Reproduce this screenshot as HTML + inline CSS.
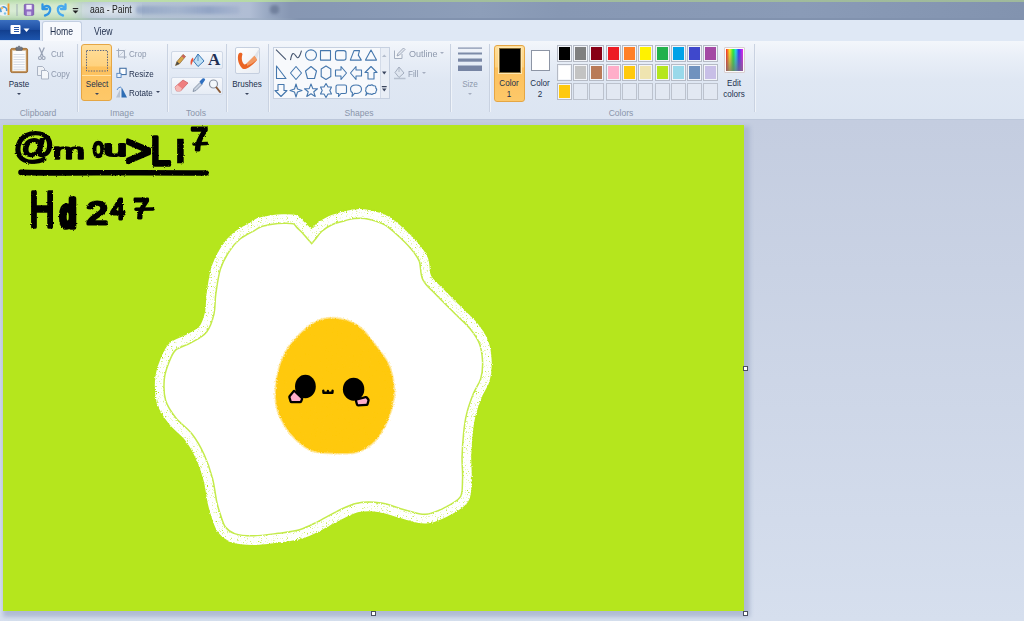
<!DOCTYPE html>
<html><head><meta charset="utf-8"><title>aaa - Paint</title>
<style>
*{box-sizing:border-box;margin:0;padding:0}
html,body{width:1024px;height:621px;overflow:hidden;background:#cdd6e7}
body{font-family:"Liberation Sans",sans-serif;font-size:11px;color:#1e2b45;position:relative}
#app{position:absolute;left:0;top:0;width:1024px;height:621px;overflow:hidden}
.abs{position:absolute}
/* title bar */
#title{left:0;top:0;width:1024px;height:20px;background:linear-gradient(90deg,#b6c6d3 0,#b6c6d3 95px,#b0bdd4 250px,#98a8c2 268px,#8797b3 290px,#8798b4 330px,#8d9eb9 480px,#8798b4 560px,#8a9bb7 800px,#8293af 1024px)}
#title:before{content:"";position:absolute;left:0;top:0;width:100%;height:1.5px;background:linear-gradient(90deg,#c3e3ae,#b5d8a6 260px,#a3c09c 300px,#9fb99c 1024px)}
#title:after{content:"";position:absolute;left:0;top:18px;width:100%;height:2px;background:linear-gradient(90deg,#a8c9a5,#a9bfc4 100px,#9fafc6 260px,#8192ae 300px,#8192ae 1024px)}
#tleft{left:0;top:0;width:92px;height:20px;background:linear-gradient(#b7dcaa 0,#d2e8cb 25%,#d9ecd5 55%,#c4dfbf 85%,#a9cca5 100%);-webkit-mask-image:linear-gradient(90deg,#000 0,#000 70px,transparent 92px);mask-image:linear-gradient(90deg,#000 0,#000 70px,transparent 92px)}
#tglow{left:82px;top:2px;width:60px;height:16px;background:radial-gradient(ellipse at center,rgba(235,240,246,.85) 0,rgba(225,232,242,.5) 50%,rgba(225,232,242,0) 100%)}
#tblur{left:136px;top:6px;width:104px;height:8px;background:linear-gradient(90deg,rgba(120,142,185,.55),rgba(135,155,195,.35) 40%,rgba(120,142,185,.55) 70%,rgba(150,165,200,.3));filter:blur(1.5px);border-radius:3px}
#tblob{left:270px;top:5px;width:9px;height:9px;background:rgba(90,105,135,.6);filter:blur(1.5px);border-radius:4px}
#ttext{left:90px;top:3px;font-size:10.5px;color:#1a1a1a;white-space:nowrap;transform:scaleX(.82);transform-origin:0 50%}
/* tab row */
#tabs{left:0;top:20px;width:1024px;height:21px;background:#dfe8f5}
#filebtn{left:0;top:20px;width:39.5px;height:19.5px;background:linear-gradient(#3b6fc0,#1c4da1 50%,#123f8e 51%,#1d55ad);border-radius:0 3px 0 0}
#hometab{left:42px;top:21px;width:39.5px;height:20px;background:#f7f9fd;border:1px solid #c3cfe2;border-bottom:none;border-radius:3px 3px 0 0}
.tabtxt{top:25px;font-size:10.5px;color:#24324f;white-space:nowrap;transform:scaleX(.82);transform-origin:0 50%}
/* ribbon */
#ribbon{left:0;top:41px;width:1024px;height:79px;background:linear-gradient(#f3f6fb 0,#e8eef7 18px,#dfe7f3 40px,#dce5f2 100%);border-bottom:1px solid #bcc7da}
.sep{position:absolute;top:44px;width:1px;height:68px;background:#c9d2e1;box-shadow:1px 0 0 #eff3f9}
.glabel{position:absolute;top:106px;font-size:9.5px;margin-top:.9px;color:#8a95aa;white-space:nowrap;transform:translateX(-50%) scaleX(.9)}
.t{position:absolute;font-size:9.5px;margin-top:.9px;color:#22304d;white-space:nowrap;transform:scaleX(.85);transform-origin:0 50%}
.tc{position:absolute;font-size:9.5px;margin-top:.4px;color:#22304d;white-space:nowrap;transform:translateX(-50%) scaleX(.85);text-align:center;line-height:11px}
.dis{color:#8e99ad}
.arr{position:absolute;width:0;height:0;margin-left:.5px;border-left:2px solid transparent;border-right:2px solid transparent;border-top:2.5px solid #3a455e}
.obtn{position:absolute;border:1px solid #e5a644;border-radius:3px;background:linear-gradient(#ffdf9c 0,#ffd27e 38%,#fdc15d 40%,#fdc869 100%)}
/* work area */
#work{left:0;top:120px;width:1024px;height:501px;background:linear-gradient(#c4cde0 0,#c9d2e4 150px,#d2dbeb 400px,#d6dfee 100%)}
#cshadow{left:3px;top:126px;width:747px;height:491px;background:#a9b5cf;opacity:.85;filter:blur(2px)}
#canvas{left:3px;top:125px;width:740.5px;height:485.5px;background:#b5e61d;overflow:hidden}
.pc{position:absolute;width:15px;height:17px;border:1px solid #b5bac5;background:#f3f5f9;padding:1px}.pc div{width:100%;height:100%}.pe{background:#e2e8f2;border-color:#bcc2cd}
.hdl{position:absolute;width:5px;height:5px;background:#fff;border:1px solid #4a5060}
</style></head><body><div id="app">

<div id="title" class="abs"></div><div id="tleft" class="abs"></div><div id="tglow" class="abs"></div><div id="tblur" class="abs"></div><div id="tblob" class="abs"></div>
<div id="ttext" class="abs">aaa - Paint</div>
<div id="tabs" class="abs"></div>
<div id="filebtn" class="abs"></div>
<div id="hometab" class="abs"></div>
<div class="abs tabtxt" style="left:50px">Home</div>
<div class="abs tabtxt" style="left:94px">View</div>
<div id="ribbon" class="abs"></div>

<!-- RIBBON-START -->
<!-- title bar icons -->
<svg class="abs" style="left:0;top:0" width="90" height="20" viewBox="0 0 90 20">
 <path d="M0 5.500 Q5 3.500 7.500 7 L8 15 Q4 16.500 0 15Z" fill="#eef3f6"/><path d="M1.500 12 a3 3 0 1 1 5 -1" fill="none" stroke="#4a98d8" stroke-width="1.600"/><circle cx="2" cy="8" r="1.300" fill="#e8c070"/><circle cx="5" cy="13.500" r="1.200" fill="#7cc3e8"/><rect x="7.600" y="3.500" width="1.800" height="11.500" fill="#ee9a2e"/>
 <rect x="16.500" y="4" width="1" height="12" fill="#9fb0b4"/>
 <rect x="24.300" y="4.300" width="9.400" height="11" rx="1" fill="#8e6cc2" stroke="#7453ab" stroke-width=".8"/><rect x="26.300" y="4.800" width="5.400" height="4.600" fill="#f1ecfa"/><rect x="26.800" y="11.500" width="4.400" height="3.800" fill="#cfc3ea"/>
 <path d="M42.500 4.500 L42.500 9 L47 9 M43 8.500 C45.500 4 51 6 50 10.800 C49.400 13.200 47.500 15 45 15.500" fill="none" stroke="#2f95e4" stroke-width="2.300" stroke-linecap="round" stroke-linejoin="round"/>
 <path d="M65.500 4.500 L65.500 9 L61 9 M65 8.500 C62.500 4 57 6 58 10.800 C58.600 13.200 60.500 15 63 15.500" fill="none" stroke="#48aaee" stroke-width="2.300" stroke-linecap="round" stroke-linejoin="round"/>
 <rect x="72.800" y="8" width="5.400" height="1.100" fill="#222"/><path d="M72.600 10.400 L78.400 10.400 L75.500 13.500Z" fill="#222"/>
</svg>
<!-- file button glyph -->
<svg class="abs" style="left:-2px;top:20px" width="41" height="20" viewBox="0 0 41 20">
 <rect x="12.5" y="5" width="10" height="9" rx="1" fill="#fff"/><rect x="16" y="7" width="5" height="1" fill="#2a58a8"/><rect x="16" y="9" width="5" height="1" fill="#2a58a8"/><rect x="16" y="11" width="5" height="1" fill="#2a58a8"/>
 <path d="M25.5 8.5 L31.5 8.5 L28.5 12Z" fill="#fff"/>
</svg>

<!-- group separators -->
<div class="sep" style="left:77px"></div><div class="sep" style="left:167px"></div><div class="sep" style="left:226px"></div><div class="sep" style="left:268px"></div><div class="sep" style="left:450px"></div><div class="sep" style="left:489px"></div><div class="sep" style="left:754px"></div>
<div class="glabel" style="left:38px">Clipboard</div>
<div class="glabel" style="left:122px">Image</div>
<div class="glabel" style="left:196px">Tools</div>
<div class="glabel" style="left:359px">Shapes</div>
<div class="glabel" style="left:621px">Colors</div>

<!-- Clipboard -->
<svg class="abs" style="left:8px;top:45px" width="24" height="30" viewBox="8 45 24 30">
 <rect x="10.600" y="48.400" width="17" height="24.200" rx="1.600" fill="#c08a4c" stroke="#a06d33" stroke-width=".9"/>
 <rect x="12.300" y="50.600" width="13.600" height="20.400" fill="#fcfcfd" stroke="#d9cdb8" stroke-width=".5"/>
 <path d="M13.500 54.500h11.200M13.500 57h11.200M13.500 59.500h11.200M13.500 62h11.200M13.500 64.500h11.200M13.500 67h11.200M13.500 69.300h11.200" stroke="#cfd7e3" stroke-width=".9"/>
 <rect x="15.800" y="47.200" width="6.600" height="3.200" rx=".8" fill="#6e7480" stroke="#4f5560" stroke-width=".5"/>
 <rect x="18" y="45.800" width="2.200" height="2" rx=".6" fill="#7a808c"/>
</svg>
<div class="tc" style="left:19px;top:78px">Paste</div><div class="arr" style="left:16.5px;top:93px"></div>
<svg class="abs" style="left:37px;top:47px" width="10" height="14" viewBox="0 0 10 14"><path d="M2.200 .5 L6 9 M7.300 .5 L3.500 9" stroke="#98a2b5" stroke-width="1.300" fill="none"/><circle cx="3" cy="11" r="1.500" fill="none" stroke="#98a2b5" stroke-width="1.100"/><circle cx="6.600" cy="11" r="1.500" fill="none" stroke="#98a2b5" stroke-width="1.100"/></svg>
<div class="t dis" style="left:51px;top:47px">Cut</div>
<svg class="abs" style="left:36px;top:65px" width="14" height="15" viewBox="0 0 14 15"><path d="M1.5 1.5h5l2 2v7h-7z" fill="#eef1f6" stroke="#aab3c3"/><path d="M5.5 5.500h5l2 2v6.500h-7z" fill="#f5f7fa" stroke="#aab3c3"/></svg>
<div class="t dis" style="left:51px;top:67px">Copy</div>

<!-- Image -->
<div class="obtn" style="left:80.800px;top:44px;width:31.200px;height:57.200px"></div>
<div class="abs" style="left:81.800px;top:74.500px;width:29.200px;height:1px;background:#ffe2a3"></div>
<svg class="abs" style="left:84.500px;top:49px" width="25" height="24" viewBox="0 0 25 24"><rect x="1.500" y="1.500" width="21" height="20.500" fill="none" stroke="#5d6680" stroke-width="1" stroke-dasharray="1.500 1.200"/></svg>
<div class="tc" style="left:97px;top:78px">Select</div><div class="arr" style="left:94.500px;top:93px"></div>
<svg class="abs" style="left:116px;top:47.500px" width="11" height="12" viewBox="0 0 13 14"><path d="M3 0.500v10h9.500M0.500 3h9.500v10" fill="none" stroke="#a3adbf" stroke-width="1.200"/><path d="M4 9 L11 2" stroke="#b4bdcc" stroke-width=".9"/></svg>
<div class="t dis" style="left:129px;top:47px">Crop</div>
<svg class="abs" style="left:115.500px;top:67px" width="11" height="11.800" viewBox="0 0 13 14"><rect x="4.500" y="1.500" width="7.500" height="7.500" fill="#fdfeff" stroke="#39689f" stroke-width="1.2"/><rect x="1" y="7.500" width="5" height="5" fill="#eaf1fa" stroke="#4b7fbd" stroke-width="1"/></svg>
<div class="t" style="left:129px;top:67px">Resize</div>
<svg class="abs" style="left:115px;top:85px" width="13" height="14" viewBox="0 0 13 14"><path d="M6.500 2 L12 12.500 L6.500 12.500Z" fill="#2e6db4"/><path d="M5 4.500 L5 12.500 L1 12.500Z" fill="#b8c3d3"/><path d="M2 5 Q3 2 6 2" fill="none" stroke="#5a8fd0" stroke-width="1"/></svg>
<div class="t" style="left:129px;top:86px">Rotate</div><div class="arr" style="left:155.500px;top:90.500px;border-left-width:2px;border-right-width:2px;border-top-width:2.500px"></div>

<!-- Tools -->
<div class="abs" style="left:171px;top:50.500px;width:52px;height:18.500px;border:1px solid #cfd8e6;border-radius:2px;background:linear-gradient(#f6f8fc,#e6ecf5)"></div>
<div class="abs" style="left:171px;top:76.500px;width:52px;height:18.500px;border:1px solid #cfd8e6;border-radius:2px;background:linear-gradient(#f6f8fc,#e6ecf5)"></div>
<svg class="abs" style="left:171px;top:50px" width="53" height="46" viewBox="171 50 53 46">
 <!-- pencil -->
 <path d="M175.500 65.500 L177 61.500 L183 54.500 L185.500 56.500 L179.500 63.800Z" fill="#d9a648" stroke="#8c6a34" stroke-width=".7"/><path d="M175.500 65.500 L177 61.500 L179.500 63.800Z" fill="#4a4a4a"/><path d="M183 54.500 L185.500 56.500 L184 58.300 L181.600 56.300Z" fill="#c96060"/>
 <!-- bucket -->
 <path d="M198 54 L204 61 L198 66.500 L193.500 61Z" fill="#bfe0f5" stroke="#3a78b5" stroke-width="1"/><path d="M193 57.500 C190.500 59 190 62.500 191 65.500 C192.500 62.500 193 60.500 193.500 60Z" fill="#e8553a"/><path d="M198 54 L198 61" stroke="#3a78b5" stroke-width=".8"/>
 <!-- eraser -->
 <path d="M175 87 L183 80 L188 83 L180.500 91 L176.500 91Z" fill="#ef7f80" stroke="#c85a5c" stroke-width=".7"/><path d="M175 87 L177.500 85 L182 88.500 L180.500 91 L176.500 91Z" fill="#f6b7b5"/>
 <!-- picker -->
 <path d="M193 91.500 L194 88.500 L200 82.500 L202 84.500 L196 90.500Z" fill="#c9d3e0" stroke="#6c7a90" stroke-width=".7"/><path d="M199.500 81.500 L202.500 78.500 Q204.500 77.800 205.200 79.800 L203 83 L201.800 84.800Z" fill="#2f6fc0"/>
 <!-- magnifier -->
 <circle cx="213.500" cy="84" r="4" fill="#f4f8fc" stroke="#8a93a3" stroke-width="1.2"/><path d="M216.500 87.500 L220 92" stroke="#8a5a36" stroke-width="2" stroke-linecap="round"/>
</svg>
<div class="abs" style="left:208px;top:51px;font-family:'Liberation Serif',serif;font-weight:bold;font-size:17px;color:#1f2f55;line-height:17px">A</div>

<!-- Brushes -->
<div class="abs" style="left:234.500px;top:46.500px;width:25px;height:27px;border:1px solid #c5cfdf;border-radius:2px;background:linear-gradient(135deg,#ffffff,#e9edf3)"></div>
<svg class="abs" style="left:234px;top:46px" width="27" height="29" viewBox="0 0 27 29"><path d="M4.500 8 C2.500 13 5.500 21 9.500 23 C13 23.500 19 19 23 14 L21 10 C17 14 13 18 10.500 18.500 C8 17 7 12.500 8.500 8 C7.500 6 5.500 6.500 4.500 8Z" fill="#ea6424"/><path d="M13 17 L20.500 9.500 L23.200 13.500 C19 17.500 16 19 13 20Z" fill="#f29a63"/><path d="M20.500 9.500 L24.500 3.500 L25.500 4.200 L23 13Z" fill="#dfe3ea"/></svg>
<div class="tc" style="left:247px;top:78px">Brushes</div><div class="arr" style="left:244.500px;top:93px"></div>

<!-- Shapes -->
<div class="abs" style="left:272.500px;top:46.500px;width:117px;height:52px;border:1px solid #c6d0e0;background:#f7f9fc"></div>
<div class="abs" style="left:379.500px;top:47.500px;width:9px;height:50px;background:#e9eef6;border-left:1px solid #d3dbe8"></div>
<svg class="abs" style="left:273px;top:47px" width="116" height="51" viewBox="273 47 116 51" fill="none" stroke="#4577ad" stroke-width="1.1" stroke-linejoin="round">
<g transform="translate(0,1.1)">
 <path d="M276 48.500 L286 58.500" stroke="#44546e"/>
 <path d="M290.500 59 C292 50 294 52 296 55 C298 59 300 55 301.500 49.500" stroke="#44546e"/>
 <ellipse cx="311" cy="54" rx="5.500" ry="5.200"/>
 <rect x="320.500" y="49.500" width="10" height="9.500"/>
 <rect x="335.500" y="49.500" width="10.500" height="9.500" rx="2.200"/>
 <path d="M354 49.500 L359.500 49.500 L358.300 54 L361.300 59 L350.300 59Z"/>
 <path d="M371 49 L376.500 59 L365.500 59Z"/>
</g><g transform="translate(0,.5)">
 <path d="M276.500 65.500 L276.500 78 L286 78Z"/>
 <path d="M296 66 L301.500 72.500 L296 79 L290.500 72.500Z"/>
 <path d="M311 66 L316.500 70.500 L314.500 78 L307.500 78 L305.500 70.500Z"/>
 <path d="M326 65.500 L330.800 68.500 L330.800 76 L326 79 L321.200 76 L321.200 68.500Z"/>
 <path d="M335.500 69.500 L341 69.500 L341 66 L346.500 72.500 L341 79 L341 75.500 L335.500 75.500Z"/>
 <path d="M361.500 69.500 L356 69.500 L356 66 L350.500 72.500 L356 79 L356 75.500 L361.500 75.500Z"/>
 <path d="M368 78.500 L368 72 L365 72 L371 66 L377 72 L374 72 L374 78.500Z"/>
</g>
 <path d="M278 84.500 L284 84.500 L284 90.500 L287 90.500 L281 96.500 L275 90.500 L278 90.500Z"/>
 <path d="M296 84 L297.500 89 L302 90.500 L297.500 92 L296 97 L294.500 92 L290 90.500 L294.500 89Z"/>
 <path d="M311 84 L312.800 88.600 L317.500 88.800 L313.800 91.800 L315.200 96.500 L311 93.800 L306.800 96.500 L308.200 91.800 L304.500 88.800 L309.200 88.600Z"/>
 <path d="M326 83.500 L328 87 L331.500 87 L329.800 90.500 L331.500 94 L328 94 L326 97.500 L324 94 L320.500 94 L322.200 90.500 L320.500 87 L324 87Z"/>
 <path d="M337.500 85 L345 85 Q346.500 85 346.500 86.500 L346.500 92 Q346.500 93.500 345 93.500 L341 93.500 L338.500 96.500 L338.800 93.500 L337.500 93.500 Q336 93.500 336 92 L336 86.500 Q336 85 337.500 85Z"/>
 <path d="M356 85 C359.500 85 361.500 87 361.500 89.300 C361.500 91.800 359 93.500 356 93.500 L354.500 93.400 L352 96.500 L352.500 92.800 C351 92 350.500 90.800 350.500 89.300 C350.500 87 352.500 85 356 85Z"/>
 <path d="M367.500 86.500 Q368 84.500 370 85.500 Q372 84 373.500 85.800 Q376 85.500 375.800 88 Q377.500 89.500 376 91.500 Q376 93.800 373.500 93.500 Q372 95 370 93.800 Q368.500 94.500 367.800 93 L365.800 95.500 L366.500 92.500 Q364.800 91 366 89.300 Q365.500 87 367.500 86.500Z"/>
 <path d="M382 57 L386.500 57 L384.250 54.500Z" fill="#b3bccc" stroke="none"/>
 <path d="M382 71.500 L386.500 71.500 L384.250 74.500Z" fill="#3a455e" stroke="none"/>
 <path d="M382 88.500 L386.500 88.500 L384.250 91.500Z M381.800 86 L386.700 86 L386.700 87.200 L381.800 87.200Z" fill="#3a455e" stroke="none"/>
</svg>
<svg class="abs" style="left:393px;top:46px" width="14" height="14" viewBox="0 0 14 14"><path d="M1.500 4.500 L1.500 12.500 L9 12.500 L9 8" fill="#f2f5f9" stroke="#a4aebf" stroke-width="1"/><path d="M4 10 L5 7.500 L10.500 2 L12 3.500 L6.500 9Z" fill="#e2e7ef" stroke="#98a3b5" stroke-width=".9"/></svg>
<div class="t dis" style="left:408.500px;top:47px;transform:scaleX(.95)">Outline</div><div class="arr" style="left:439.500px;top:51.500px;border-left-width:2px;border-right-width:2px;border-top:2.500px solid #a5aec0"></div>
<svg class="abs" style="left:393px;top:65px" width="14" height="15" viewBox="0 0 14 15"><path d="M6 2 L11 8 L6 12.500 L2 7.500Z" fill="#dfe6f0" stroke="#a4aebf" stroke-width="1"/><path d="M1 13.500 L12.500 13.500" stroke="#b7c0cf" stroke-width="1.500"/><path d="M6 2 L6 7" stroke="#a4aebf" stroke-width=".8"/></svg>
<div class="t dis" style="left:408px;top:67px">Fill</div><div class="arr" style="left:421.500px;top:71.500px;border-left-width:2px;border-right-width:2px;border-top:2.500px solid #a5aec0"></div>

<!-- Size -->
<svg class="abs" style="left:458px;top:46px" width="25" height="26" viewBox="0 0 25 26"><rect x="0" y="1.500" width="24" height="1.200" fill="#8390ab"/><rect x="0" y="6.500" width="24" height="2" fill="#7d8ba8"/><rect x="0" y="12.500" width="24" height="3.200" fill="#7987a5"/><rect x="0" y="19.500" width="24" height="5.500" fill="#7684a3"/></svg>
<div class="tc dis" style="left:469.500px;top:78px">Size</div><div class="arr" style="left:467px;top:93px;border-top-color:#a5aec0"></div>

<!-- Colors -->
<div class="obtn" style="left:493.500px;top:44.500px;width:31px;height:57px"></div>
<div class="abs" style="left:498.500px;top:47.800px;width:22px;height:25.400px;background:#000;border:1px solid #7a6434;box-shadow:0 0 0 1px #ffe7b0"></div>
<div class="tc" style="left:509px;top:78px;line-height:10.600px">Color<br>1</div>
<div class="abs" style="left:530.500px;top:49.500px;width:19px;height:21px;background:#fff;border:1px solid #8d95a5"></div>
<div class="tc" style="left:540px;top:78px;line-height:10.600px">Color<br>2</div>
<div class="pc" style="left:556.7px;top:45.2px"><div style="background:#000000"></div></div>
<div class="pc" style="left:573.0px;top:45.2px"><div style="background:#7f7f7f"></div></div>
<div class="pc" style="left:589.3px;top:45.2px"><div style="background:#880015"></div></div>
<div class="pc" style="left:605.6px;top:45.2px"><div style="background:#ed1c24"></div></div>
<div class="pc" style="left:621.9px;top:45.2px"><div style="background:#ff7f27"></div></div>
<div class="pc" style="left:638.2px;top:45.2px"><div style="background:#fff200"></div></div>
<div class="pc" style="left:654.5px;top:45.2px"><div style="background:#22b14c"></div></div>
<div class="pc" style="left:670.8px;top:45.2px"><div style="background:#00a2e8"></div></div>
<div class="pc" style="left:687.1px;top:45.2px"><div style="background:#3f48cc"></div></div>
<div class="pc" style="left:703.4px;top:45.2px"><div style="background:#a349a4"></div></div>
<div class="pc" style="left:556.7px;top:64.3px"><div style="background:#ffffff"></div></div>
<div class="pc" style="left:573.0px;top:64.3px"><div style="background:#c3c3c3"></div></div>
<div class="pc" style="left:589.3px;top:64.3px"><div style="background:#b97a57"></div></div>
<div class="pc" style="left:605.6px;top:64.3px"><div style="background:#ffaec9"></div></div>
<div class="pc" style="left:621.9px;top:64.3px"><div style="background:#ffc90e"></div></div>
<div class="pc" style="left:638.2px;top:64.3px"><div style="background:#efe4b0"></div></div>
<div class="pc" style="left:654.5px;top:64.3px"><div style="background:#b5e61d"></div></div>
<div class="pc" style="left:670.8px;top:64.3px"><div style="background:#99d9ea"></div></div>
<div class="pc" style="left:687.1px;top:64.3px"><div style="background:#7092be"></div></div>
<div class="pc" style="left:703.4px;top:64.3px"><div style="background:#c8bfe7"></div></div>
<div class="pc" style="left:556.7px;top:83.3px"><div style="background:#ffc90e"></div></div>
<div class="pc pe" style="left:573.0px;top:83.3px"></div>
<div class="pc pe" style="left:589.3px;top:83.3px"></div>
<div class="pc pe" style="left:605.6px;top:83.3px"></div>
<div class="pc pe" style="left:621.9px;top:83.3px"></div>
<div class="pc pe" style="left:638.2px;top:83.3px"></div>
<div class="pc pe" style="left:654.5px;top:83.3px"></div>
<div class="pc pe" style="left:670.8px;top:83.3px"></div>
<div class="pc pe" style="left:687.1px;top:83.3px"></div>
<div class="pc pe" style="left:703.4px;top:83.3px"></div>
<div class="abs" style="left:723.500px;top:47px;width:21px;height:26px;border:1px solid #d9cfd0;border-radius:1px;padding:1px;background:#fbfbfb"><div style="width:100%;height:100%;background:linear-gradient(rgba(128,128,128,0),rgba(120,110,120,.75)),linear-gradient(90deg,#f22 0,#fe2 22%,#2e3 42%,#2de 58%,#33f 75%,#e2e 100%)"></div></div>
<div class="tc" style="left:734px;top:78px;line-height:10.600px">Edit<br>colors</div>
<!-- RIBBON-END -->

<div id="work" class="abs"></div>
<div id="cshadow" class="abs"></div>
<div id="canvas" class="abs">
<!-- DRAWING-START -->
<svg width="741" height="486" viewBox="3 125 741 486" style="position:absolute;left:0;top:0">
<defs>
<filter id="cray" x="-5%" y="-5%" width="110%" height="110%">
<feTurbulence type="fractalNoise" baseFrequency="0.8" numOctaves="2" seed="3" result="n"/>
<feDisplacementMap in="SourceGraphic" in2="n" scale="2.6" xChannelSelector="R" yChannelSelector="G" result="d"/>
<feColorMatrix in="n" type="matrix" values="0 0 0 0 0 0 0 0 0 0 0 0 0 0 0 0 0 0 -5 4.1" result="m"/>
<feComposite in="d" in2="m" operator="in"/>
</filter>
<filter id="cray2" x="-5%" y="-5%" width="110%" height="110%">
<feTurbulence type="fractalNoise" baseFrequency="0.9" numOctaves="2" seed="8" result="n"/>
<feDisplacementMap in="SourceGraphic" in2="n" scale="2.4" xChannelSelector="R" yChannelSelector="G"/>
</filter>
<path id="ew" d="M311.6 236.0 C312.8 234.6 315.5 230.2 318.6 227.5 C321.7 224.8 326.4 221.8 330.3 220.0 C334.2 218.2 338.1 217.5 342.0 216.4 C345.9 215.3 349.9 214.2 353.8 213.7 C357.7 213.2 361.6 213.1 365.5 213.6 C369.4 214.1 373.4 215.2 377.2 216.4 C380.9 217.6 384.2 218.6 388.0 221.0 C391.8 223.4 395.4 226.6 399.8 230.6 C404.2 234.6 410.3 240.3 414.3 245.1 C418.3 249.9 421.9 254.2 424.0 259.6 C426.1 265.0 424.8 272.2 427.2 277.3 C429.6 282.4 433.4 284.8 438.5 290.2 C443.6 295.6 451.9 303.6 457.8 309.5 C463.7 315.4 469.5 320.2 473.9 325.6 C478.3 331.0 481.7 335.8 484.0 341.7 C486.3 347.6 487.2 354.6 487.5 361.0 C487.8 367.4 487.1 374.3 485.5 380.0 C483.9 385.7 480.3 389.6 478.0 395.4 C475.7 401.2 473.1 408.4 471.5 414.8 C469.9 421.2 469.2 427.0 468.5 434.0 C467.8 441.0 467.2 449.1 467.0 456.6 C466.8 464.1 467.9 472.1 467.5 479.2 C467.1 486.3 468.1 493.9 464.5 499.5 C460.9 505.1 452.5 509.2 446.0 512.5 C439.5 515.8 432.8 519.0 425.6 519.3 C418.4 519.6 410.5 516.4 403.0 514.5 C395.5 512.6 388.0 509.1 380.5 508.0 C373.0 506.9 365.0 506.6 358.0 508.0 C351.0 509.4 345.1 513.0 338.6 516.1 C332.2 519.2 325.6 523.4 319.3 526.5 C313.0 529.6 307.7 532.5 301.0 534.5 C294.3 536.5 287.0 537.2 279.0 538.2 C271.0 539.2 260.5 540.8 252.8 540.8 C245.1 540.8 238.2 540.1 233.0 538.3 C227.8 536.5 224.3 533.5 221.5 530.0 C218.7 526.5 217.6 521.5 216.0 517.0 C214.4 512.5 213.4 509.5 212.0 503.2 C210.6 496.9 209.7 487.0 207.6 479.2 C205.5 471.4 202.8 463.6 199.6 456.6 C196.4 449.6 192.9 443.2 188.3 437.3 C183.7 431.4 176.8 427.1 172.2 421.2 C167.6 415.3 163.1 408.9 160.9 401.9 C158.8 394.9 158.8 386.1 159.3 379.3 C159.9 372.5 162.0 366.5 164.2 361.0 C166.3 355.5 168.2 350.2 172.2 346.5 C176.2 342.8 183.2 341.4 188.3 338.5 C193.4 335.6 199.3 333.1 202.8 328.8 C206.3 324.5 207.8 318.6 209.2 312.7 C210.5 306.8 209.8 300.9 210.9 293.4 C212.0 285.9 213.3 275.1 215.7 267.6 C218.1 260.1 221.8 253.7 225.3 248.3 C228.8 242.9 232.0 239.2 236.6 235.4 C241.2 231.7 248.8 228.1 252.7 225.8 C256.6 223.5 256.8 222.9 260.0 221.8 C263.2 220.7 267.8 219.9 271.7 219.3 C275.6 218.7 279.5 218.4 283.4 218.4 C287.3 218.4 292.3 218.2 295.2 219.2 C298.1 220.2 299.1 222.7 301.0 224.6 C302.9 226.5 305.1 228.6 306.9 230.5 C308.7 232.4 310.8 235.1 311.6 236.0Z"/>
</defs>
<!-- egg white -->
<use href="#ew" fill="#fff"/>
<use href="#ew" fill="none" stroke="#b5e61d" stroke-opacity=".8" stroke-width="11.4" stroke-linejoin="miter" stroke-miterlimit="5"/>
<use href="#ew" fill="none" stroke="#fff" stroke-width="8.4" stroke-linejoin="miter" stroke-miterlimit="5" filter="url(#cray)"/>
<!-- yolk -->
<g transform="translate(334.5 385.5) scale(.985 .988) translate(-334.5 -385.5)"><path id="yk" d="M329.6 316.7 C335.0 316.5 342.0 317.4 347.6 319.3 C353.2 321.2 358.3 324.2 363.0 328.3 C367.7 332.4 371.7 338.2 376.0 343.8 C380.3 349.4 385.8 356.2 388.8 361.8 C391.8 367.4 392.9 371.3 394.0 377.3 C395.1 383.3 396.2 390.6 395.3 397.9 C394.4 405.2 392.0 413.7 388.8 421.0 C385.6 428.3 381.1 436.3 376.0 441.7 C370.9 447.1 364.8 451.1 357.9 453.3 C351.0 455.5 342.4 454.8 334.7 454.6 C327.0 454.4 318.4 454.6 311.5 452.0 C304.6 449.4 298.9 444.6 293.5 439.0 C288.1 433.4 282.5 425.4 279.3 418.5 C276.1 411.6 274.6 405.6 274.2 397.9 C273.8 390.1 274.8 380.1 276.7 372.0 C278.6 363.9 281.7 355.8 285.8 349.0 C289.9 342.2 296.3 335.7 301.2 331.0 C306.1 326.3 310.7 323.0 315.4 320.6 C320.1 318.2 324.2 316.9 329.6 316.7Z" fill="#ffc90e" filter="url(#cray2)"/><use href="#yk" fill="none" stroke="#ffe9a6" stroke-width="1.8" filter="url(#cray)" opacity=".75"/></g>
<!-- face -->
<ellipse cx="305.4" cy="386.5" rx="10.4" ry="11.7" fill="#000"/>
<ellipse cx="353.6" cy="389.2" rx="10.7" ry="11.5" fill="#000"/>
<path d="M294.2 392.3 L301 398.7 L300 401 L291.7 401 L290.5 397Z" fill="#ffaec9" stroke="#000" stroke-width="4.6" stroke-linejoin="round"/>
<path d="M294.2 392.3 L301 398.7 L300 401 L291.7 401 L290.5 397Z" fill="#ffaec9"/>
<path d="M357.1 400.6 L365.9 398.2 L367.4 400.2 L366.4 403.8 L358.1 404.2Z" fill="#ffaec9" stroke="#000" stroke-width="4.6" stroke-linejoin="round"/>
<path d="M357.1 400.6 L365.9 398.2 L367.4 400.2 L366.4 403.8 L358.1 404.2Z" fill="#ffaec9"/>
<path d="M323.3 390.6 L323.5 392.8 L332.4 392.8 L332.6 390.6 M327.9 391 L327.9 392.8" fill="none" stroke="#000" stroke-width="2.4" stroke-linejoin="round" stroke-linecap="round"/>
<!-- scribbles -->
<g filter="url(#cray2)" font-family="'Liberation Sans',sans-serif" fill="#000" stroke="#000" stroke-linejoin="round" stroke-linecap="round">
<text transform="matrix(0.2713 0 0 0.2360 13.27 157.68)" font-size="150" font-weight="normal" stroke-width="9">@</text>
<text transform="matrix(0.2586 0 0 0.1413 52.84 158.72)" font-size="150" font-weight="normal" stroke-width="11">m</text>
<text transform="matrix(0.1337 0 0 0.1796 92.70 156.87)" font-size="150" font-weight="normal" stroke-width="15">o</text>
<text transform="matrix(0.2756 0 0 0.1458 103.81 155.76)" font-size="150" font-weight="normal" stroke-width="15">u</text>
<text transform="matrix(0.2976 0 0 0.3000 125.55 165.65)" font-size="150" font-weight="normal" stroke-width="11">&gt;</text>
<text transform="matrix(0.2405 0 0 0.2733 150.68 165.42)" font-size="150" font-weight="normal" stroke-width="13">L</text>
<text transform="matrix(0.2913 0 0 0.2261 174.28 162.77)" font-size="150" font-weight="bold" stroke-width="2">l</text>
<text transform="matrix(0.2099 0 0 0.2121 190.49 150.02)" font-size="150" font-weight="normal" stroke-width="13">7</text>
<text transform="matrix(0.2316 0 0 0.3281 29.49 227.20)" font-size="150" font-weight="normal" stroke-width="11">H</text>
<text transform="matrix(0.1796 0 0 0.2606 59.70 227.27)" font-size="150" font-weight="bold" stroke-width="22">d</text>
<text transform="matrix(0.2598 0 0 0.2151 86.34 224.49)" font-size="150" font-weight="normal" stroke-width="14">2</text>
<text transform="matrix(0.1703 0 0 0.1924 110.77 218.76)" font-size="150" font-weight="normal" stroke-width="15">4</text>
<text transform="matrix(0.1867 0 0 0.1856 133.41 218.01)" font-size="150" font-weight="normal" stroke-width="15">7</text>
<path d="M21 172.4 C60 173.6 120 172 206 173" fill="none" stroke-width="5.6"/>
<path d="M136 209.200 L153 209 M194 144 L206.500 143.500" fill="none" stroke-width="3.6"/>
</g>
</svg>
<!-- DRAWING-END -->
</div>
<div class="hdl" style="left:743px;top:366px"></div>
<div class="hdl" style="left:371px;top:611px"></div>
<div class="hdl" style="left:743px;top:611px"></div>

</div></body></html>
